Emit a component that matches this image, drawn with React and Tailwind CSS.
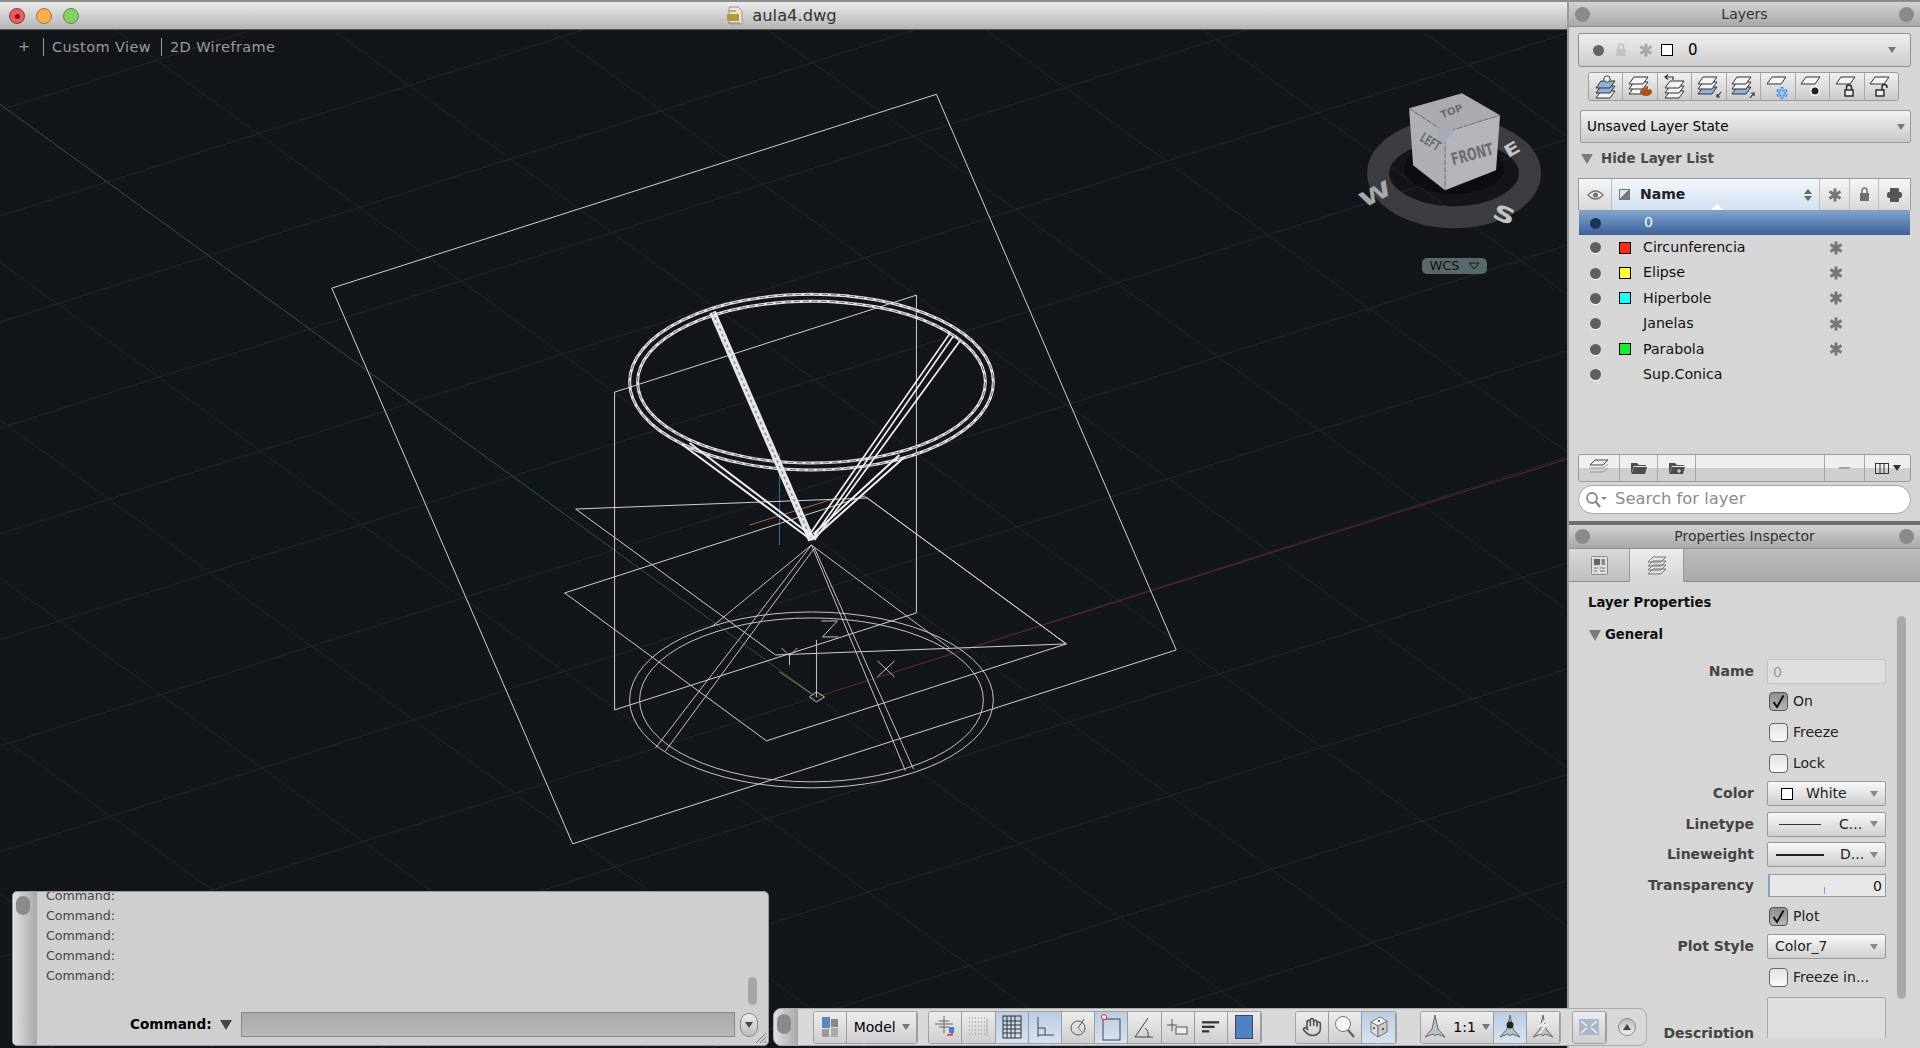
import { Hand } from 'lucide-react';

const gridA = Array.from({ length: 26 }, (_, i) => i - 14);
const gridB = Array.from({ length: 24 }, (_, i) => i - 12);

const layers = [
  { name: 'Circunferencia', color: 'bg-[#ff2a10]', frozen: true },
  { name: 'Elipse', color: 'bg-[#ffff33]', frozen: true },
  { name: 'Hiperbole', color: 'bg-[#14ffff]', frozen: true },
  { name: 'Janelas', color: '', frozen: true },
  { name: 'Parabola', color: 'bg-[#10f030]', frozen: true },
  { name: 'Sup.Conica', color: '', frozen: false },
];

// paralelogramo de uma camada, usado nos icones
const Sheet = ({ y = 0, x = 0, fill = '#f4f4f4', stroke = '#333' }) => (
  <path d={`M${x + 8} ${y} L${x + 22} ${y} L${x + 17} ${y + 7} L${x + 3} ${y + 7} Z`} fill={fill} stroke={stroke} strokeWidth="1" />
);

const Icon = ({ children, size = 26, box = 26 }) => (
  <svg width={size} height={size} viewBox={`0 0 ${box} ${box}`}>{children}</svg>
);

const Padlock = ({ x, y, open }) => (
  <g fill="none" stroke="#222" strokeWidth="1.4">
    <rect x={x} y={y + 5} width="8" height="6" fill="#eee" />
    {open
      ? <path d={`M${x + 6} ${y + 5} V${y + 2} a2.5 2.5 0 0 1 5 0 V${y + 3}`} />
      : <path d={`M${x + 1.5} ${y + 5} V${y + 2.5} a2.5 2.5 0 0 1 5 0 V${y + 5}`} />}
  </g>
);

const layerTools = [
  <Icon key="a"><Sheet y={17} /><Sheet y={12} fill="#8fb2dc" /><Sheet y={7} fill="#8fb2dc" /><circle cx="14" cy="5" r="3.2" fill="#eee" stroke="#444" /></Icon>,
  <Icon key="b"><Sheet y={13} x={-1} /><Sheet y={8} x={-1} /><Sheet y={3} x={-1} /><ellipse cx="19" cy="18" rx="6" ry="4" fill="#a8521c" /><path d="M21 15 l3 -2" stroke="#eee" strokeWidth="1.5" /></Icon>,
  <Icon key="c"><Sheet y={17} /><Sheet y={12} /><Sheet y={7} /><path d="M11 6 V3 H3 M6 0.5 L3 3 L6 5.5" fill="none" stroke="#333" strokeWidth="1.2" /></Icon>,
  <Icon key="d"><Sheet y={13} x={-1} fill="#8fb2dc" /><Sheet y={8} x={-1} /><Sheet y={3} x={-1} /><path d="M25 18 L21 23 M21 20 V23 H24" fill="none" stroke="#333" strokeWidth="1.2" /></Icon>,
  <Icon key="e"><Sheet y={13} x={-1} fill="#8fb2dc" /><Sheet y={8} x={-1} /><Sheet y={3} x={-1} /><path d="M20 24 L24 19 M21 19 H24 V22" fill="none" stroke="#333" strokeWidth="1.2" /></Icon>,
  <Icon key="f"><Sheet y={3} x={-1} /><path d="M17 13 V25 M12 16 L22 22 M22 16 L12 22" stroke="#3d8fe8" strokeWidth="3" /><path d="M17 14 V24 M13 16.5 L21 21.5 M21 16.5 L13 21.5" stroke="#cfe6ff" strokeWidth="1" /></Icon>,
  <Icon key="g"><Sheet y={3} x={-1} /><circle cx="16" cy="17" r="5" fill="#fff" /><circle cx="16" cy="17" r="3.5" fill="#222" /></Icon>,
  <Icon key="h"><Sheet y={3} x={-1} /><Padlock x={11} y={11} /></Icon>,
  <Icon key="i"><Sheet y={3} x={-1} /><Padlock x={8} y={11} open /></Icon>,
];

const Star = ({ className = '' }) => (
  <svg width="14" height="14" viewBox="0 0 14 14" className={className}>
    <path d="M7 0.5 V13.5 M1.5 3.5 L12.5 10.5 M12.5 3.5 L1.5 10.5" stroke="#767676" strokeWidth="3" />
  </svg>
);

const Dot = ({ dark }) => (
  <span className={dark ? 'block w-[11px] h-[11px] rounded-full bg-[#1f3556]' : 'block w-[11px] h-[11px] rounded-full bg-[#5f5f5f] shadow-[0_1px_1px_#fff]'} />
);

const Caret = ({ className = 'border-t-[#777]' }) => (
  <span className={`block w-0 h-0 border-x-[4px] border-x-transparent border-t-[6px] ${className}`} />
);

const PanelTitle = ({ children, className = '' }) => (
  <div className={`shrink-0 flex items-center justify-between px-[6px] bg-linear-to-b from-[#d2d2d2] to-[#a8a8a8] border-b border-[#8e8e8e] ${className}`}>
    <span className="w-[15px] h-[15px] rounded-full bg-[#8a8a8a]" />
    <span className="text-[14px] text-[#333]">{children}</span>
    <span className="w-[15px] h-[15px] rounded-full bg-[#8a8a8a]" />
  </div>
);

const Check = ({ on, label }) => (
  <div className="flex items-center gap-[5px] pl-[2px]">
    <span className={on
      ? 'w-[19px] h-[19px] rounded-[4px] border border-[#555] bg-linear-to-b from-[#8f8f8f] to-[#b5b5b5] flex items-center justify-center'
      : 'w-[19px] h-[19px] rounded-[4px] border border-[#666] bg-linear-to-b from-[#e2e2e2] to-[#fafafa]'}>
      {on && (
        <svg width="15" height="15" viewBox="0 0 15 15"><path d="M2.5 8 L6 13 L12.5 1.5" fill="none" stroke="#111" strokeWidth="2" /></svg>
      )}
    </span>
    <span className="text-[14px] text-[#222]">{label}</span>
  </div>
);

const PropSelect = ({ children }) => (
  <div className="w-[119px] h-[25px] rounded-[2px] border border-[#9a9a9a] bg-linear-to-b from-[#f8f8f8] to-[#cfcfcf] flex items-center pl-[8px] pr-[7px] text-[14px] text-[#222]">
    <div className="flex-1 flex items-center min-w-0">{children}</div>
    <Caret className="border-t-[#888]" />
  </div>
);

const PropRow = ({ label, children }) => (
  <div className="h-[30.6px] shrink-0 flex items-center">
    <span className="w-[186px] pr-[1px] text-right text-[14px] font-bold text-[#444] whitespace-nowrap">{label}</span>
    <div className="ml-[12px]">{children}</div>
  </div>
);

const LinePreview = ({ width, thick }) => (
  <span className={thick ? 'block h-[2px] bg-[#222] mr-[16px]' : 'block h-px bg-[#333] mr-[18px]'} style={{ width }} />
);

const BarBtn = ({ active, className = 'w-[33.2px]', children }) => (
  <div className={`${className} h-full shrink-0 flex items-center justify-center gap-[6px] border-r border-[#9c9c9c] ${active
    ? 'bg-linear-to-b from-[#bccde2] to-[#d6e2f0]'
    : 'bg-linear-to-b from-[#ededed] to-[#cecece]'}`}>
    {children}
  </div>
);

const BarGroup = ({ children, className = '' }) => (
  <div className={`h-[33px] flex rounded-[3px] border border-[#a0a0a0] overflow-hidden ${className}`}>{children}</div>
);

const Annotate = ({ dot, slash }) => (
  <svg width="24" height="26" viewBox="0 0 24 26">
    <path d="M12 1 L15 15 L22 23 L14 20 L12 22 L10 20 L2 23 L9 15 Z" fill="#b8c2cc" stroke="#666" />
    {dot && <circle cx="12" cy="11" r="3.5" fill="#222" />}
    {slash && <path d="M17 4 L9 12 L15 11 L8 20" fill="none" stroke="#eee" strokeWidth="2" />}
  </svg>
);

// faixa grossa da elipse de cima, com o tracejado escuro por dentro
const Band = ({ rx, ry }) => (
  <>
    <ellipse cx="812" cy="382" rx={rx} ry={ry} stroke="#e4e4e4" strokeWidth="3" />
    <ellipse cx="812" cy="382" rx={rx} ry={ry} stroke="#4a4c50" strokeWidth="0.8" strokeDasharray="6 3" />
  </>
);

const Drawing = () => (
  <svg viewBox="0 30 1568 1018" className="absolute inset-0 w-full h-full" fill="none">
    {gridA.map((k) => (
      <line key={k} x1="0" y1={697 + 261 + k * 106} x2="1568" y2={697 + 261 + k * 106 - 501} stroke="#24282d" />
    ))}
    {gridB.map((k) => (
      <line key={k} x1="0" y1={697 - 593 + k * 158} x2="1568" y2={697 - 593 + k * 158 + 1138} stroke="#22262b" />
    ))}
    {/* eixos */}
    <line x1="0" y1="104" x2="817" y2="697" stroke="#1d5a22" />
    <line x1="817" y1="697" x2="1568" y2="459" stroke="#6a2226" />
    <line x1="780" y1="453" x2="780" y2="545" stroke="#41689a" />
    <line x1="750" y1="525" x2="837" y2="498" stroke="#a8634a" />
    {/* planos */}
    <g stroke="#d0d0d0">
      <path d="M937 94 L1177 650 L573 844 L332 288 Z" />
      <path d="M615 392 L917 295 V613 L615 710 Z" />
      <path d="M576 509 L868 498 L1067 644 L776 655 Z" />
      <path d="M565 593 L865 496 L1067 644 L767 741 Z" />
    </g>
    {/* cone inferior */}
    <g stroke="#c4c4c4">
      <ellipse cx="812" cy="700" rx="182" ry="88" />
      <ellipse cx="812" cy="700" rx="172" ry="82" />
      <path d="M812 545 L656 748 M815 548 L666 751 M812 545 L906 771 M815 548 L914 769" />
      <path d="M812 545 L712 627 M812 545 L950 648" />
      <path d="M817 697 V640 M822 621 H838 L823 637 H839" />
      <path d="M782 648 L790 656 L798 648 M790 656 V665" />
      <path d="M878 661 L895 677 M895 661 L878 677" />
      <path d="M780 672 L812 694" stroke="#6d8f5f" />
      <path d="M810 697 L817 692 L825 697 L817 702 Z" />
    </g>
    {/* cone superior */}
    <g stroke="#f0f0f0">
      <Band rx={182} ry={88} />
      <Band rx={174} ry={81} />
      <path d="M812 540 L713 312" strokeWidth="7" stroke="#e6e6e6" />
      <path d="M812 540 L713 312" strokeWidth="1.5" stroke="#8a8a8a" strokeDasharray="3 3" />
      <path d="M812 540 L954 336 M815 540 L961 340 M809 536 L950 334" strokeWidth="1.7" />
      <path d="M812 540 L682 444 M810 534 L690 443 M812 540 L904 458 M814 534 L900 455" strokeWidth="2" />
    </g>
    {/* viewcube */}
    <ellipse cx="1455" cy="173" rx="76" ry="44" stroke="#3b3d41" strokeWidth="22" />
    <ellipse cx="1455" cy="168" rx="50" ry="26" fill="#08090b" opacity="0.6" />
    <polygon points="1410,108 1463,93 1501,115 1446,132" fill="#a9abae" />
    <polygon points="1410,108 1446,132 1446,190 1414,165" fill="#aeb0b3" />
    <polygon points="1446,132 1501,115 1497,170 1446,190" fill="#b3b5b8" />
    <path d="M1410 108 L1446 132 L1501 115 M1446 132 V190" stroke="#6e7073" strokeDasharray="5 2" />
    <polygon points="1438,128 1451,125 1456,131 1445,143 1438,139" fill="#a3acb8" />
    <g fontFamily="'DejaVu Sans', sans-serif" fontWeight="700">
      <text x="0" y="0" fontSize="10" fill="#6a6c70" transform="translate(1443 118) rotate(-20)">TOP</text>
      <text x="0" y="0" fontSize="12" fill="#6a6c70" transform="translate(1420 140) rotate(32) scale(.65 1.15)">LEFT</text>
      <text x="0" y="0" fontSize="14" fill="#6a6c70" transform="translate(1454 165) rotate(-15) scale(.8 1.2)">FRONT</text>
      <text x="0" y="0" fontSize="26" fill="#a5a7aa" transform="translate(1365 208) rotate(-28) scale(1.15 .8)">W</text>
      <text x="0" y="0" fontSize="25" fill="#c2c4c6" transform="translate(1492 217) rotate(22) scale(1.25 .85)">S</text>
      <text x="0" y="0" fontSize="21" fill="#c2c4c6" transform="translate(1509 158) rotate(-30) scale(1.1 .8)">E</text>
    </g>
  </svg>
);

export default function App() {
  return (
    <div className="relative w-[1920px] h-[1048px] overflow-hidden flex bg-[#12161b] font-['DejaVu_Sans',sans-serif]">
      {/* janela principal */}
      <div className="w-[1567px] shrink-0 flex flex-col">
        <div className="h-[30px] shrink-0 relative flex items-center justify-center gap-[8px] pr-[4px] border-t-2 border-[#8c8c8c] border-b border-b-[#5a5a5a] bg-linear-to-b from-[#ececec] to-[#b4b4b4]">
          <div className="absolute left-[9px] top-[6px] flex gap-[11px]">
            <span className="w-[16px] h-[16px] rounded-full border border-[#8c3a3a] bg-[#ee5c60] flex items-center justify-center">
              <span className="w-[5px] h-[5px] rounded-full bg-[#8a0c14]" />
            </span>
            <span className="w-[16px] h-[16px] rounded-full border border-[#a57a30] bg-[#f2b04e]" />
            <span className="w-[16px] h-[16px] rounded-full border border-[#5c8d42] bg-[#85cf62]" />
          </div>
          <svg width="18" height="20" viewBox="0 0 18 20">
            <path d="M3 1 H12 L16 5 V18 H3 Z" fill="#ede6c8" stroke="#999" />
            <rect x="1" y="8" width="12" height="7" fill="#b09a3c" />
            <path d="M3 5 H10 M3 17 H14" stroke="#777" />
          </svg>
          <span className="text-[16.3px] leading-[24px] text-[#333]">aula4.dwg</span>
        </div>

        <div className="relative flex-1">
          <Drawing />
          <div className="absolute left-[18px] top-[6px] flex items-center text-[14.5px] text-[#9a9a9a] tracking-[0.4px]">
            <span className="w-[25px]">+</span>
            <span className="h-[18px] leading-[18px] border-l border-[#999] pl-[8px] pr-[10px]">Custom View</span>
            <span className="h-[18px] leading-[18px] border-l border-[#999] pl-[8px]">2D Wireframe</span>
          </div>
          <div className="absolute left-[1422px] top-[228px] w-[65px] h-[16px] rounded-[5px] bg-[#5b6869] flex items-center justify-center gap-[8px] text-[13px] text-[#101316]">
            WCS
            <svg width="12" height="8" viewBox="0 0 12 8"><path d="M1 1 H11 L6 7 Z" fill="none" stroke="#15181b" /></svg>
          </div>
        </div>
      </div>

      {/* paineis da direita */}
      <div className="flex-1 flex flex-col border-l-2 border-[#9a9a9a] bg-[#d6d6d6] text-[#222]">
        <PanelTitle className="h-[27px] border-t-2 border-t-[#8c8c8c]">Layers</PanelTitle>
        <div className="h-[498px] shrink-0 flex flex-col px-[9px] border-b-4 border-[#6f6f6f]">
          <div className="mt-[6px] h-[34px] rounded-[3px] border border-[#8f8f8f] bg-linear-to-b from-[#eeeeee] to-[#cdcdcd] flex items-center px-[14px]">
            <span className="w-[11px] h-[11px] rounded-full bg-[#666]" />
            <svg width="12" height="14" viewBox="0 0 12 14" className="ml-[11px]"><rect x="1.5" y="6" width="9" height="7" fill="#c2c2c2" /><path d="M3.5 6 V3.5 a2.5 2.5 0 0 1 5 0 V6" fill="none" stroke="#c2c2c2" strokeWidth="1.5" /></svg>
            <Star className="ml-[12px] opacity-50" />
            <span className="ml-[8px] w-[12px] h-[12px] border-[1.5px] border-black bg-white" />
            <span className="ml-[15px] text-[15px] text-black">0</span>
            <Caret className="ml-auto border-t-[#777]" />
          </div>
          <div className="mt-[5px] mx-[10px] h-[29px] w-[311px] rounded-[3px] border border-[#9a9a9a] flex overflow-hidden">
            {layerTools.map((tool, i) => (
              <div key={i} className="flex-1 flex items-center justify-center border-r border-[#a8a8a8] last:border-r-0 bg-linear-to-b from-[#f0f0f0] to-[#cbcbcb]">
                {tool}
              </div>
            ))}
          </div>
          <div className="mt-[9px] ml-[2px] h-[33px] rounded-[2px] border border-[#9a9a9a] bg-linear-to-b from-[#f2f2f2] to-[#c9c9c9] flex items-center pl-[6px] pr-[5px] text-[13.6px] text-black">
            Unsaved Layer State
            <Caret className="ml-auto border-t-[#777]" />
          </div>
          <div className="mt-[7px] ml-[3px] h-[18px] flex items-center gap-[5px] font-bold text-[13.4px] text-[#4a4a4a]">
            <span className="w-0 h-0 border-x-[6px] border-x-transparent border-t-[10px] border-t-[#7b7b7b]" />
            <span className="ml-[3px]">Hide Layer List</span>
          </div>

          <div className="mt-[10px] h-[32px] flex border border-[#9a9a9a] border-b-0 bg-linear-to-b from-[#f6f6f6] to-[#d8d8d8]">
            <div className="w-[33px] flex items-center justify-center border-r border-[#bdbdbd]">
              <svg width="17" height="12" viewBox="0 0 17 12"><path d="M1 6 Q8.5 -2 16 6 Q8.5 14 1 6 Z" fill="#eee" stroke="#777" strokeWidth="1.5" /><circle cx="8.5" cy="6" r="2.6" fill="#777" /></svg>
            </div>
            <div className="relative w-[208px] flex items-center pl-[7px] bg-linear-to-b from-[#f3f6fb] to-[#d3e1f2] border-r border-[#bdbdbd] text-[14px] font-bold">
              <span className="w-[11px] h-[11px] border border-[#777] bg-linear-to-br from-[#e4e4e4] from-50% to-[#777] to-50%" />
              <span className="ml-[10px]">Name</span>
              <span className="ml-auto mr-[7px] flex flex-col gap-[2px]">
                <span className="w-0 h-0 border-x-[4px] border-x-transparent border-b-[5px] border-b-[#666]" />
                <span className="w-0 h-0 border-x-[4px] border-x-transparent border-t-[5px] border-t-[#666]" />
              </span>
              <span className="absolute left-[99px] bottom-0 w-0 h-0 border-x-[6px] border-x-transparent border-b-[6px] border-b-white" />
            </div>
            <div className="w-[30px] flex items-center justify-center border-r border-[#bdbdbd]"><Star /></div>
            <div className="w-[29px] flex items-center justify-center border-r border-[#bdbdbd]">
              <svg width="11" height="15" viewBox="0 0 11 15"><rect x="1" y="6" width="9" height="8" fill="#707070" /><path d="M3 6 V3.5 a2.5 2.5 0 0 1 5 0 V6" fill="none" stroke="#707070" strokeWidth="1.5" /></svg>
            </div>
            <div className="flex-1 flex items-center justify-center">
              <svg width="15" height="14" viewBox="0 0 15 14"><rect x="3" y="0" width="9" height="14" rx="1" fill="#555" /><rect x="0" y="4" width="15" height="6" rx="2" fill="#555" /></svg>
            </div>
          </div>
          <div className="h-[25px] shrink-0 ml-px mr-[1px] flex items-center bg-linear-to-b from-[#7ea4d2] to-[#3e5f97] text-white text-[14.2px] border-t border-[#999]">
            <span className="ml-[11px]"><Dot dark /></span>
            <span className="ml-[43px]">0</span>
          </div>
          {layers.map((layer) => (
            <div key={layer.name} className="h-[25.4px] shrink-0 flex items-center text-[14.2px] text-[#111]">
              <span className="ml-[12px]"><Dot /></span>
              {layer.color
                ? <span className={`ml-[18px] w-[12px] h-[12px] border border-black ${layer.color}`} />
                : <span className="ml-[18px] w-[12px] h-[12px]" />}
              <span className="ml-[12px] w-[186px]">{layer.name}</span>
              {layer.frozen && <Star />}
            </div>
          ))}
          <div className="flex-1" />
          <div className="h-[28px] shrink-0 mb-[3px] flex rounded-[3px] border border-[#9a9a9a] overflow-hidden bg-linear-to-b from-[#efefef] from-50% to-[#cfcfcf] to-50%">
            <div className="w-[41px] flex items-center justify-center border-r border-[#a8a8a8]">
              <svg width="20" height="18" viewBox="0 0 20 18"><path d="M6 1 H19 L14 6 H1 Z" fill="#f0f0f0" stroke="#444" /><path d="M1 9 H14 L19 5 M1 13 H14 L19 9" fill="none" stroke="#999" /></svg>
            </div>
            {[0, 1].map((i) => (
              <div key={i} className="w-[38px] flex items-center justify-center border-r border-[#a8a8a8]">
                <svg width="18" height="14" viewBox="0 0 18 14"><path d="M1 2 H7 L9 4 H16 V5 H4 L1 13 Z M4 6 H17 L15 13 H1.5 Z" fill="#4d4d4d" />{i === 1 && <path d="M11 8 V12 M9 10 H13" stroke="#eee" />}</svg>
              </div>
            ))}
            <div className="flex-1 border-r border-[#a8a8a8]" />
            <div className="w-[40px] flex items-center justify-center border-r border-[#a8a8a8]"><span className="w-[11px] h-[2px] bg-[#a5a5a5]" /></div>
            <div className="w-[45px] flex items-center justify-center gap-[4px]">
              <svg width="14" height="11" viewBox="0 0 14 11"><rect x="0.5" y="0.5" width="13" height="10" fill="none" stroke="#333" /><path d="M5 0 V11 M9 0 V11" stroke="#333" /></svg>
              <Caret className="border-t-[#333]" />
            </div>
          </div>
          <div className="h-[29px] shrink-0 mb-[7px] rounded-full border border-[#a5a5a5] bg-white flex items-center pl-[6px] text-[16.4px] text-[#8c8c8c]">
            <svg width="24" height="18" viewBox="0 0 24 18"><circle cx="7" cy="7" r="5" fill="none" stroke="#888" strokeWidth="1.8" /><path d="M11 11 L15 16" stroke="#888" strokeWidth="2.4" /><path d="M16 6 H22 L19 9 Z" fill="#888" /></svg>
            <span className="ml-[6px]">Search for layer</span>
          </div>
        </div>

        <PanelTitle className="h-[24px]">Properties Inspector</PanelTitle>
        <div className="h-[33px] shrink-0 flex bg-linear-to-b from-[#bdbdbd] to-[#a9a9a9] border-b border-[#8e8e8e]">
          <div className="w-[61px] flex items-center justify-center bg-linear-to-b from-[#d8d8d8] to-[#bfbfbf] border-r border-[#999]">
            <svg width="17" height="19" viewBox="0 0 17 19"><rect x="0.5" y="0.5" width="16" height="18" rx="1" fill="#ddd" stroke="#888" /><rect x="3" y="3" width="6" height="6" fill="#666" /><rect x="10.5" y="3" width="3.5" height="6" fill="#888" /><path d="M3 12 H7 M9 12 H14 M3 15 H6 M9 15 H14" stroke="#777" /></svg>
          </div>
          <div className="w-[54px] -mb-px flex items-center justify-center bg-linear-to-b from-[#ececec] to-[#d6d6d6] border-r border-[#999]">
            <svg width="20" height="19" viewBox="0 0 20 19" fill="none" stroke="#777"><path d="M6 1 H19 L14 6 H1 Z M6 5 H19 L14 10 H1 Z M6 9 H19 L14 14 H1 Z M6 13 H19 L14 18 H1 Z" /></svg>
          </div>
        </div>

        <div className="relative flex-1 flex flex-col">
          <div className="pl-[19px] mt-[11px] h-[20px] flex items-center text-[13.2px] font-bold text-[#111]">Layer Properties</div>
          <div className="pl-[20px] mt-[12px] h-[20px] flex items-center gap-[4px] text-[13.2px] font-bold text-[#111]">
            <span className="w-0 h-0 border-x-[6px] border-x-transparent border-t-[11px] border-t-[#7b7b7b]" />
            General
          </div>
          <div className="mt-[11px] h-[382px] overflow-hidden flex flex-col">
            <PropRow label="Name">
              <div className="w-[119px] h-[25px] rounded-[2px] border border-[#c2c2c2] bg-[#dedede] pl-[5px] text-[14px] leading-[24px] text-[#9a9a9a]">0</div>
            </PropRow>
            <PropRow><Check on label="On" /></PropRow>
            <PropRow><Check label="Freeze" /></PropRow>
            <PropRow><Check label="Lock" /></PropRow>
            <PropRow label="Color">
              <PropSelect>
                <span className="ml-[5px] w-[12px] h-[12px] border-[1.5px] border-black bg-white" />
                <span className="ml-[13px]">White</span>
              </PropSelect>
            </PropRow>
            <PropRow label="Linetype">
              <PropSelect><span className="ml-[3px]"><LinePreview width={42} /></span>C...</PropSelect>
            </PropRow>
            <PropRow label="Lineweight">
              <PropSelect><LinePreview width={48} thick />D...</PropSelect>
            </PropRow>
            <PropRow label="Transparency">
              <div className="relative w-[118px] h-[23px] ml-[1px] border border-[#9a9a9a] bg-[#e8e8e8] text-right pr-[3px] text-[14px] leading-[22px] text-[#111]">
                0
                <span className="absolute left-0 top-0 bottom-0 w-px bg-[#6fa8f0]" />
                <span className="absolute left-[55px] bottom-[2px] h-[7px] w-px bg-[#6fa8f0]" />
              </div>
            </PropRow>
            <PropRow><Check on label="Plot" /></PropRow>
            <PropRow label="Plot Style">
              <PropSelect><span className="-ml-[1px]">Color_7</span></PropSelect>
            </PropRow>
            <PropRow><Check label="Freeze in..." /></PropRow>
            <div className="flex shrink-0 mt-[4px]">
              <span className="w-[186px] pr-[1px] pt-[26px] text-right text-[14px] font-bold text-[#444]">Description</span>
              <div className="ml-[12px] w-[119px] h-[70px] rounded-[2px] border border-[#a8a8a8] bg-[#dedede]" />
            </div>
          </div>
          <span className="absolute right-[14px] top-[34px] w-[9px] h-[383px] rounded-full bg-[#a9a9a9]" />
        </div>
      </div>

      {/* linha de comando */}
      <div className="absolute left-[12px] top-[891px] w-[757px] h-[155px] rounded-[5px] border border-[#999] bg-[#cfcfcf] flex overflow-hidden">
        <div className="relative w-[24px] shrink-0 bg-linear-to-r from-[#e0e0e0] to-[#a8a8a8] pt-[4px] pl-[3px]">
          <span className="block w-[14px] h-[19px] rounded-full bg-[#8a8a8a]" />
        </div>
        <div className="relative flex-1 text-[12.6px] text-[#444]">
          <div className="ml-[9px] -mt-[6px] flex flex-col leading-[20px]">
            <span>Command:</span>
            <span>Command:</span>
            <span>Command:</span>
            <span>Command:</span>
            <span>Command:</span>
          </div>
          <span className="absolute left-[711px] top-[85px] w-[9px] h-[28px] rounded-full bg-[#a6a6a6]" />
          <div className="absolute left-[93px] top-[120px] flex items-center text-[13.6px]">
            <span className="w-[82px] font-bold text-black">Command:</span>
            <span className="ml-[8px] w-0 h-0 border-x-[6px] border-x-transparent border-t-[10px] border-t-[#444]" />
            <div className="ml-[9px] w-[494px] h-[25px] border border-[#888] bg-linear-to-b from-[#a9a9a9] to-[#b9b9b9]" />
            <span className="ml-[5px] w-[18px] h-[24px] rounded-full border border-[#888] bg-linear-to-b from-[#eee] to-[#bbb] flex items-center justify-center"><Caret className="border-t-[#444]" /></span>
          </div>
          <svg width="14" height="14" viewBox="0 0 14 14" className="absolute right-[1px] bottom-[1px]"><path d="M13 3 L3 13 M13 7 L7 13 M13 11 L11 13" stroke="#777" /></svg>
        </div>
      </div>

      {/* barra de status */}
      <div className="absolute left-[773px] top-[1008px] w-[874px] h-[38px] rounded-[8px] border border-[#aaa] bg-[#d8d8d8] flex items-center">
        <div className="w-[24px] h-full rounded-l-[8px] bg-linear-to-r from-[#e0e0e0] to-[#a8a8a8] pl-[3px] pt-[5px]">
          <span className="block w-[14px] h-[20px] rounded-full bg-[#8a8a8a]" />
        </div>
        <BarGroup className="ml-[15px]">
          <BarBtn>
            <svg width="16" height="20" viewBox="0 0 16 20"><rect x="0" y="0" width="8" height="11" fill="#5f86b8" /><rect x="9" y="2" width="7" height="8" fill="#888" /><rect x="0" y="12" width="7" height="8" fill="#999" /><rect x="9" y="11" width="7" height="9" fill="#aaa" /></svg>
          </BarBtn>
          <BarBtn className="w-[70px]"><span className="text-[14px] text-black">Model</span><Caret className="border-t-[#777]" /></BarBtn>
        </BarGroup>
        <BarGroup className="ml-[10px]">
          <BarBtn><svg width="22" height="24" viewBox="0 0 22 24"><path d="M10 1 V18 M1 9 H19 M5 6 H15 M5 12 H15" stroke="#666" /><path d="M13 20 H18 V15" stroke="#d33" fill="none" strokeWidth="1.5" /><rect x="15" y="12" width="5" height="6" fill="#3f7fd0" /></svg></BarBtn>
          <BarBtn><svg width="22" height="24" viewBox="0 0 22 24" stroke="#888" strokeDasharray="1 2"><path d="M2 3 H20 M2 7 H20 M2 11 H20 M2 15 H20 M2 19 H20" /><path d="M20 3 V21" stroke="#aaa" strokeDasharray="none" /></svg></BarBtn>
          <BarBtn active><svg width="22" height="24" viewBox="0 0 22 24" fill="none" stroke="#333"><rect x="2" y="1" width="18" height="22" /><path d="M2 6 H20 M2 10 H20 M2 14 H20 M2 18 H20 M6 1 V23 M10 1 V23 M14 1 V23" /></svg></BarBtn>
          <BarBtn active><svg width="22" height="24" viewBox="0 0 22 24" fill="none" stroke="#444"><path d="M4 2 V20 H20 M4 20 V22 M11 13 H4 M11 13 V20" /></svg></BarBtn>
          <BarBtn><svg width="20" height="22" viewBox="0 0 20 22" fill="none" stroke="#555"><circle cx="10" cy="12" r="7" /><path d="M10 12 L16 3" /><path d="M10 12 L14 16" stroke="#888" /></svg></BarBtn>
          <BarBtn active><svg width="22" height="28" viewBox="0 0 22 28" fill="none" stroke="#444"><rect x="3" y="6" width="17" height="21" /><circle cx="4" cy="4" r="2.5" fill="#fff" stroke="#d22" /></svg></BarBtn>
          <BarBtn><svg width="22" height="24" viewBox="0 0 22 24" fill="none" stroke="#444"><path d="M2 22 H20 M2 22 L15 3 M12 13 Q16 16 15 22" /></svg></BarBtn>
          <BarBtn><svg width="22" height="20" viewBox="0 0 22 20" fill="none" stroke="#555"><path d="M5 2 V14 M0 8 H10" /><rect x="9" y="10" width="11" height="7" fill="#eee" /></svg></BarBtn>
          <BarBtn><svg width="18" height="13" viewBox="0 0 20 14"><rect x="0" y="0" width="19" height="2.5" fill="#333" /><rect x="0" y="5" width="14" height="2.5" fill="#333" /><rect x="0" y="10" width="8" height="2.5" fill="#333" /></svg></BarBtn>
          <BarBtn><span className="w-[18px] h-[24px] border border-[#445] bg-[#4f82c4]" /></BarBtn>
        </BarGroup>
        <BarGroup className="ml-[33px]">
          <BarBtn><Hand size={20} color="#555" /></BarBtn>
          <BarBtn><svg width="22" height="24" viewBox="0 0 22 24"><circle cx="9" cy="9" r="7.5" fill="#f6f6f6" stroke="#777" /><path d="M14 15 L20 22" stroke="#666" strokeWidth="2.5" /></svg></BarBtn>
          <BarBtn active><svg width="20" height="22" viewBox="0 0 20 22"><path d="M2 6 L11 1 L18 5 L9 10 Z" fill="#f5f5f5" stroke="#777" /><path d="M2 6 L9 10 V21 L2 16 Z" fill="#ddd" stroke="#777" /><path d="M9 10 L18 5 V16 L9 21 Z" fill="#c9c9c9" stroke="#777" /><circle cx="10" cy="5" r="1" fill="#333" /><circle cx="5" cy="12" r="1" fill="#333" /><circle cx="14" cy="13" r="1" fill="#333" /></svg></BarBtn>
        </BarGroup>
        <BarGroup className="ml-[23px]">
          <BarBtn className="w-[73px]"><Annotate /><span className="text-[14px] text-black">1:1</span><Caret className="border-t-[#777]" /></BarBtn>
          <BarBtn active><Annotate dot /></BarBtn>
          <BarBtn><Annotate slash /></BarBtn>
        </BarGroup>
        <BarGroup className="ml-[11px]">
          <BarBtn>
            <svg width="20" height="16" viewBox="0 0 20 16"><rect width="20" height="16" fill="#aab6cc" /><path d="M2 2 L8 7 M18 2 L12 7 M2 14 L8 9 M18 14 L12 9" stroke="#f2f4f8" strokeWidth="1.5" /></svg>
          </BarBtn>
        </BarGroup>
        <span className="ml-[11px] w-[18px] h-[18px] rounded-full border border-[#888] bg-linear-to-b from-[#bbb] to-[#eee] flex items-center justify-center">
          <span className="w-0 h-0 border-x-[4px] border-x-transparent border-b-[6px] border-b-[#444]" />
        </span>
      </div>
    </div>
  );
}
